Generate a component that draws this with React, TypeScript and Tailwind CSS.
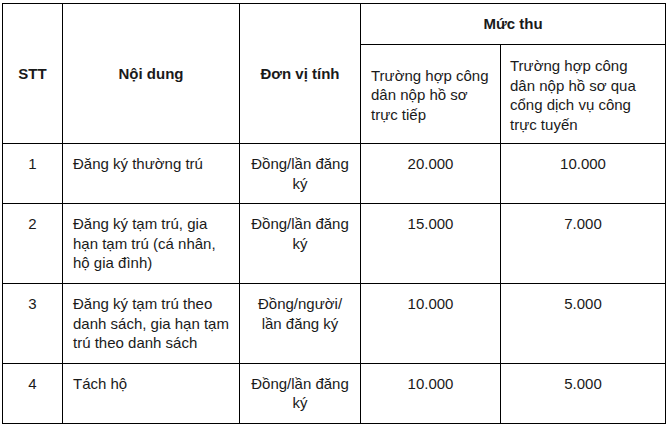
import React from "react";

const rows = [
  { stt: "1", nd: "Đăng ký thường trú", dv: "Đồng/lần đăng ký", a: "20.000", b: "10.000", h: "h-[60px]" },
  { stt: "2", nd: "Đăng ký tạm trú, gia hạn tạm trú (cá nhân, hộ gia đình)", dv: "Đồng/lần đăng ký", a: "15.000", b: "7.000", h: "h-[80px]" },
  { stt: "3", nd: "Đăng ký tạm trú theo danh sách, gia hạn tạm trú theo danh sách", dv: "Đồng/người/ lần đăng ký", a: "10.000", b: "5.000", h: "h-[79px]" },
  { stt: "4", nd: "Tách hộ", dv: "Đồng/lần đăng ký", a: "10.000", b: "5.000", h: "h-[60px]" },
];

export default function App() {
  const td = "border border-black align-top pt-[10px] pb-[10px] px-[10px]";
  return (
    <div className="w-[667px] h-[426px] bg-white pt-[3px] pl-[2px]" style={{ fontFamily: '"Liberation Sans", Arial, sans-serif' }}>
      <table className="border-collapse text-[15px] leading-[19.5px] text-[#1a1a1a] table-fixed w-[663px]">
        <colgroup>
          <col className="w-[60px]" />
          <col className="w-[177px]" />
          <col className="w-[121px]" />
          <col className="w-[140px]" />
          <col className="w-[165px]" />
        </colgroup>
        <thead>
          <tr className="h-[41px]">
            <th rowSpan={2} className="border border-black font-bold text-center align-middle">STT</th>
            <th rowSpan={2} className="border border-black font-bold text-center align-middle">Nội dung</th>
            <th rowSpan={2} className="border border-black font-bold text-center align-middle">Đơn vị tính</th>
            <th colSpan={2} className="border border-black font-bold text-center align-middle">Mức thu</th>
          </tr>
          <tr className="h-[99px]">
            <th className="border border-black font-normal text-left align-middle px-[10px] pt-[2px]">Trường hợp công dân nộp hồ sơ trực tiếp</th>
            <th className="border border-black font-normal text-left align-middle px-[9px] pt-[2px]">Trường hợp công dân nộp hồ sơ qua cổng dịch vụ công trực tuyến</th>
          </tr>
        </thead>
        <tbody>
          {rows.map((r) => (
            <tr key={r.stt} className={r.h}>
              <td className={td + " text-center"}>{r.stt}</td>
              <td className={td + " text-left"}>{r.nd}</td>
              <td className={td + " text-center"}>{r.dv}</td>
              <td className={td + " text-center"}>{r.a}</td>
              <td className={td + " text-center"}>{r.b}</td>
            </tr>
          ))}
        </tbody>
      </table>
    </div>
  );
}
